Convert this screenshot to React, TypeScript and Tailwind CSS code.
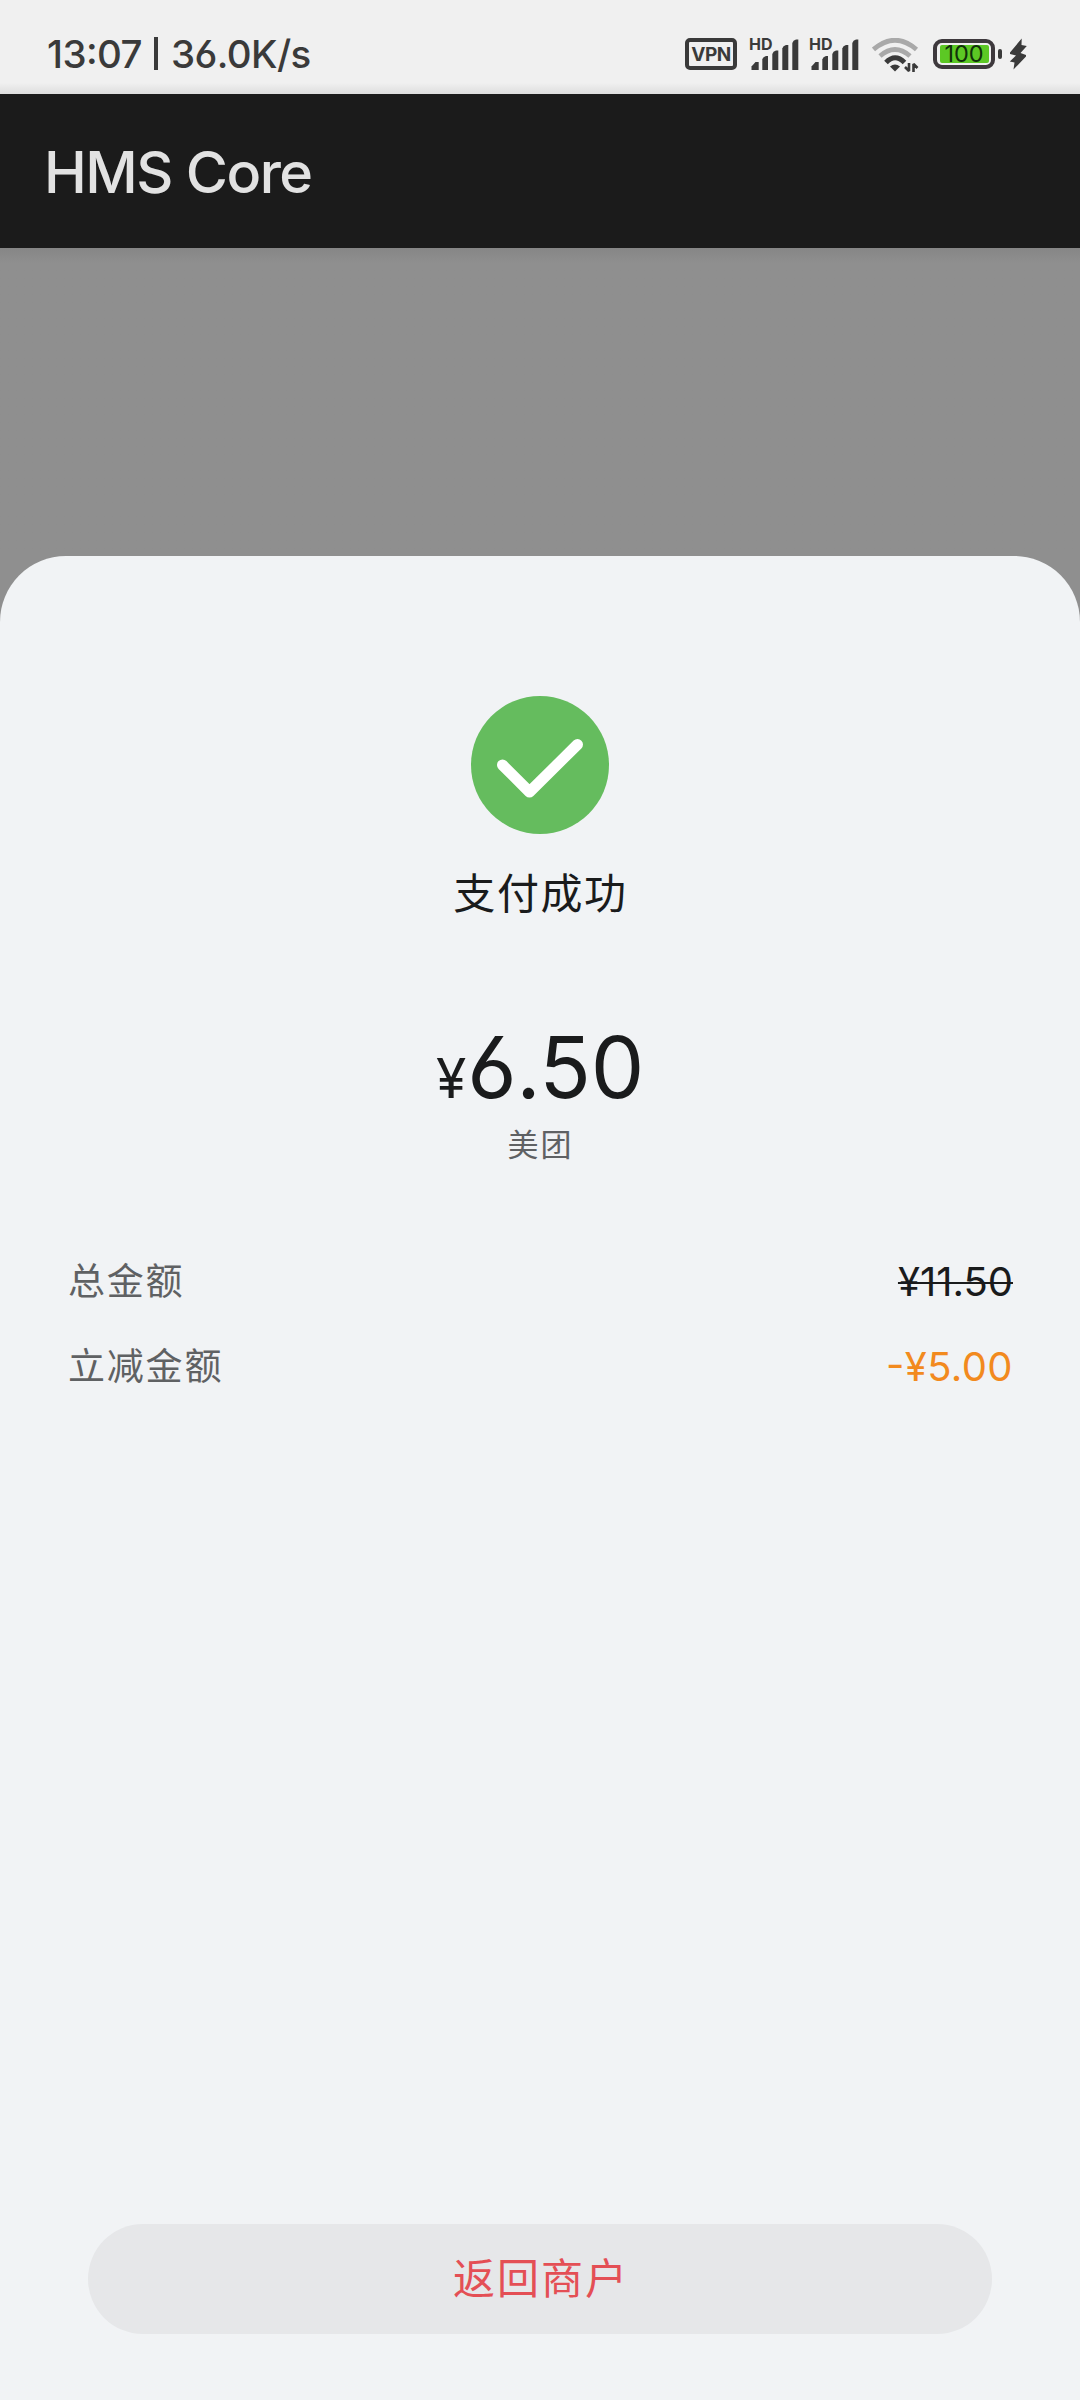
import React from "react";

interface detailRow {
  label: string;
  amount: string;
  amountClass: string;
}

const rows: detailRow[] = [
  {
    label: "总金额",
    amount: "¥11.50",
    amountClass: "text-[#1a1b1c] line-through decoration-2",
  },
  {
    label: "立减金额",
    amount: "-¥5.00",
    amountClass: "text-[#f28a1e] tracking-[0.4px]",
  },
];

const SignalIcon = () => (
  <div className="relative h-8 w-[50px]">
    <span className="absolute -top-[2px] left-0 text-[16px] leading-4 font-bold">
      HD
    </span>
    <svg viewBox="0 0 50 32" className="h-8 w-[50px]" fill="currentColor">
      <path d="M2.5 32V28.5L6.5 24H9.7V32Z" />
      <path d="M13.3 32V21.5Q14 18.5 17 18H19V32Z" />
      <path d="M23.3 32V16Q24 13 27 12.5H29.3V32Z" />
      <path d="M33.3 32V10.5Q34 7.5 37 7H39.3V32Z" />
      <path d="M43.3 32V5Q44 2 47 1.5H49.3V32Z" />
    </svg>
  </div>
);

const WifiIcon = () => (
  <svg viewBox="0 0 48 36" className="h-9 w-12" fill="none">
    <path d="M1.5 11.5Q23 -7 44.5 11.5" stroke="#a9a9a9" strokeWidth="4.8" />
    <path d="M8 18Q23 5 38 18" stroke="#a9a9a9" strokeWidth="4.8" />
    <path d="M14 24.5Q23 15 32.5 24.5" stroke="#3a3a3a" strokeWidth="5" />
    <path d="M18 28.5Q23 24.5 28 28.5L23 33.5Z" fill="#3a3a3a" />
    <path
      d="M37 25V33L33 29M41.5 34V26L45.5 30"
      stroke="#3a3a3a"
      strokeWidth="2.6"
      strokeLinejoin="bevel"
    />
  </svg>
);

const StatusBar = () => (
  <div className="flex h-[94px] items-start justify-between bg-gradient-to-b from-[#f0f0f0] from-88% to-[#dedede] pr-[53px] pl-[47px] text-[#3a3a3a]">
    <div className="mt-[30px] flex text-[38.5px] leading-[48px] font-medium tracking-[-0.6px]">
      <span className="w-[107px]">13:07</span>
      <span className="mt-[7px] mr-[13px] h-[33px] w-1 bg-[#3a3a3a]" />
      <span>36.0K/s</span>
    </div>
    <div className="mt-[38px] flex h-8 items-start">
      <span className="flex h-8 w-[52px] items-center justify-center rounded-[5px] border-4 border-[#3a3a3a] text-[19px] leading-none font-bold tracking-[-0.5px]">
        VPN
      </span>
      <div className="ml-3">
        <SignalIcon />
      </div>
      <div className="ml-[10px]">
        <SignalIcon />
      </div>
      <div className="ml-[13px]">
        <WifiIcon />
      </div>
      <div className="mt-px ml-[13px] flex h-[30px] w-[62px] items-center justify-center rounded-[9px] border-4 border-[#3e393d]">
        <span className="flex h-[18px] w-[49px] items-center justify-center rounded-[2px] bg-[#5cc824] text-[23.5px] leading-none text-[#10300a]">
          100
        </span>
      </div>
      <span className="mt-[11px] ml-[3px] h-[10px] w-1 rounded-[2px] bg-[#3a3a3a]" />
      <svg
        viewBox="0 0 18 32"
        className="ml-[7px] h-8 w-[18px]"
        fill="currentColor"
      >
        <path d="M12.7 0.5L1 14.5V16L7 17.5L0.8 23.5L5.5 24.5L4.5 31.5L17 18.5V17L11.5 15L17.8 8L12.5 7Z" />
      </svg>
    </div>
  </div>
);

const App = () => {
  return (
    <div className="flex h-[2400px] w-[1080px] flex-col bg-[#8f8f8f] font-[Inter,'Noto_Sans_CJK_SC',sans-serif] [font-feature-settings:'cv03','cv04','case']">
      <StatusBar />
      <header className="flex h-[154px] items-center bg-[#1b1b1b] px-[44px] pt-[2px] text-[57.5px] font-medium tracking-[-1.5px] text-[#e2e2e2]">
        HMS Core
      </header>
      <div className="h-[308px] bg-gradient-to-b from-[#868686] to-[#8f8f8f] to-5%" />

      <main className="flex grow flex-col items-center rounded-t-[66px] bg-[#f1f3f5] pt-[140px] pb-[66px]">
        <svg viewBox="0 0 138 138" className="size-[138px]">
          <circle cx="69" cy="69" r="69" fill="#65bc5e" />
          <path
            d="M31.5 69L58.5 96L106.5 48.5"
            fill="none"
            stroke="#fff"
            strokeWidth="11"
            strokeLinecap="round"
            strokeLinejoin="round"
          />
        </svg>
        <h1 className="mt-[30px] pl-px text-[42px] leading-[60px] tracking-[1.6px] text-[#1a1b1c]">
          支付成功
        </h1>
        <p className="mt-[92px] flex items-baseline leading-[104px] text-[#1a1b1c]">
          <span className="text-[55px]">¥</span>
          <span className="ml-px text-[85px] tracking-[-0.3px]">6.50</span>
        </p>
        <p className="-mt-[7px] pl-px text-[31px] leading-[44px] tracking-[2px] text-[#5f6163]">
          美团
        </p>

        <div className="mt-[72px] flex w-full flex-col px-[67px]">
          {rows.map((row) => (
            <div
              key={row.label}
              className="flex h-[85px] items-center justify-between"
            >
              <span className="pl-px text-[37px] tracking-[1.8px] text-[#5f6163]">
                {row.label}
              </span>
              <span className={`text-[40px] ${row.amountClass}`}>
                {row.amount}
              </span>
            </div>
          ))}
        </div>

        <button className="mt-auto h-[110px] w-[904px] rounded-full bg-[#e6e7e9] pb-[2px] pl-[2px] text-[42px] tracking-[2px] text-[#e44f55]">
          返回商户
        </button>
      </main>
    </div>
  );
};

export default App;
